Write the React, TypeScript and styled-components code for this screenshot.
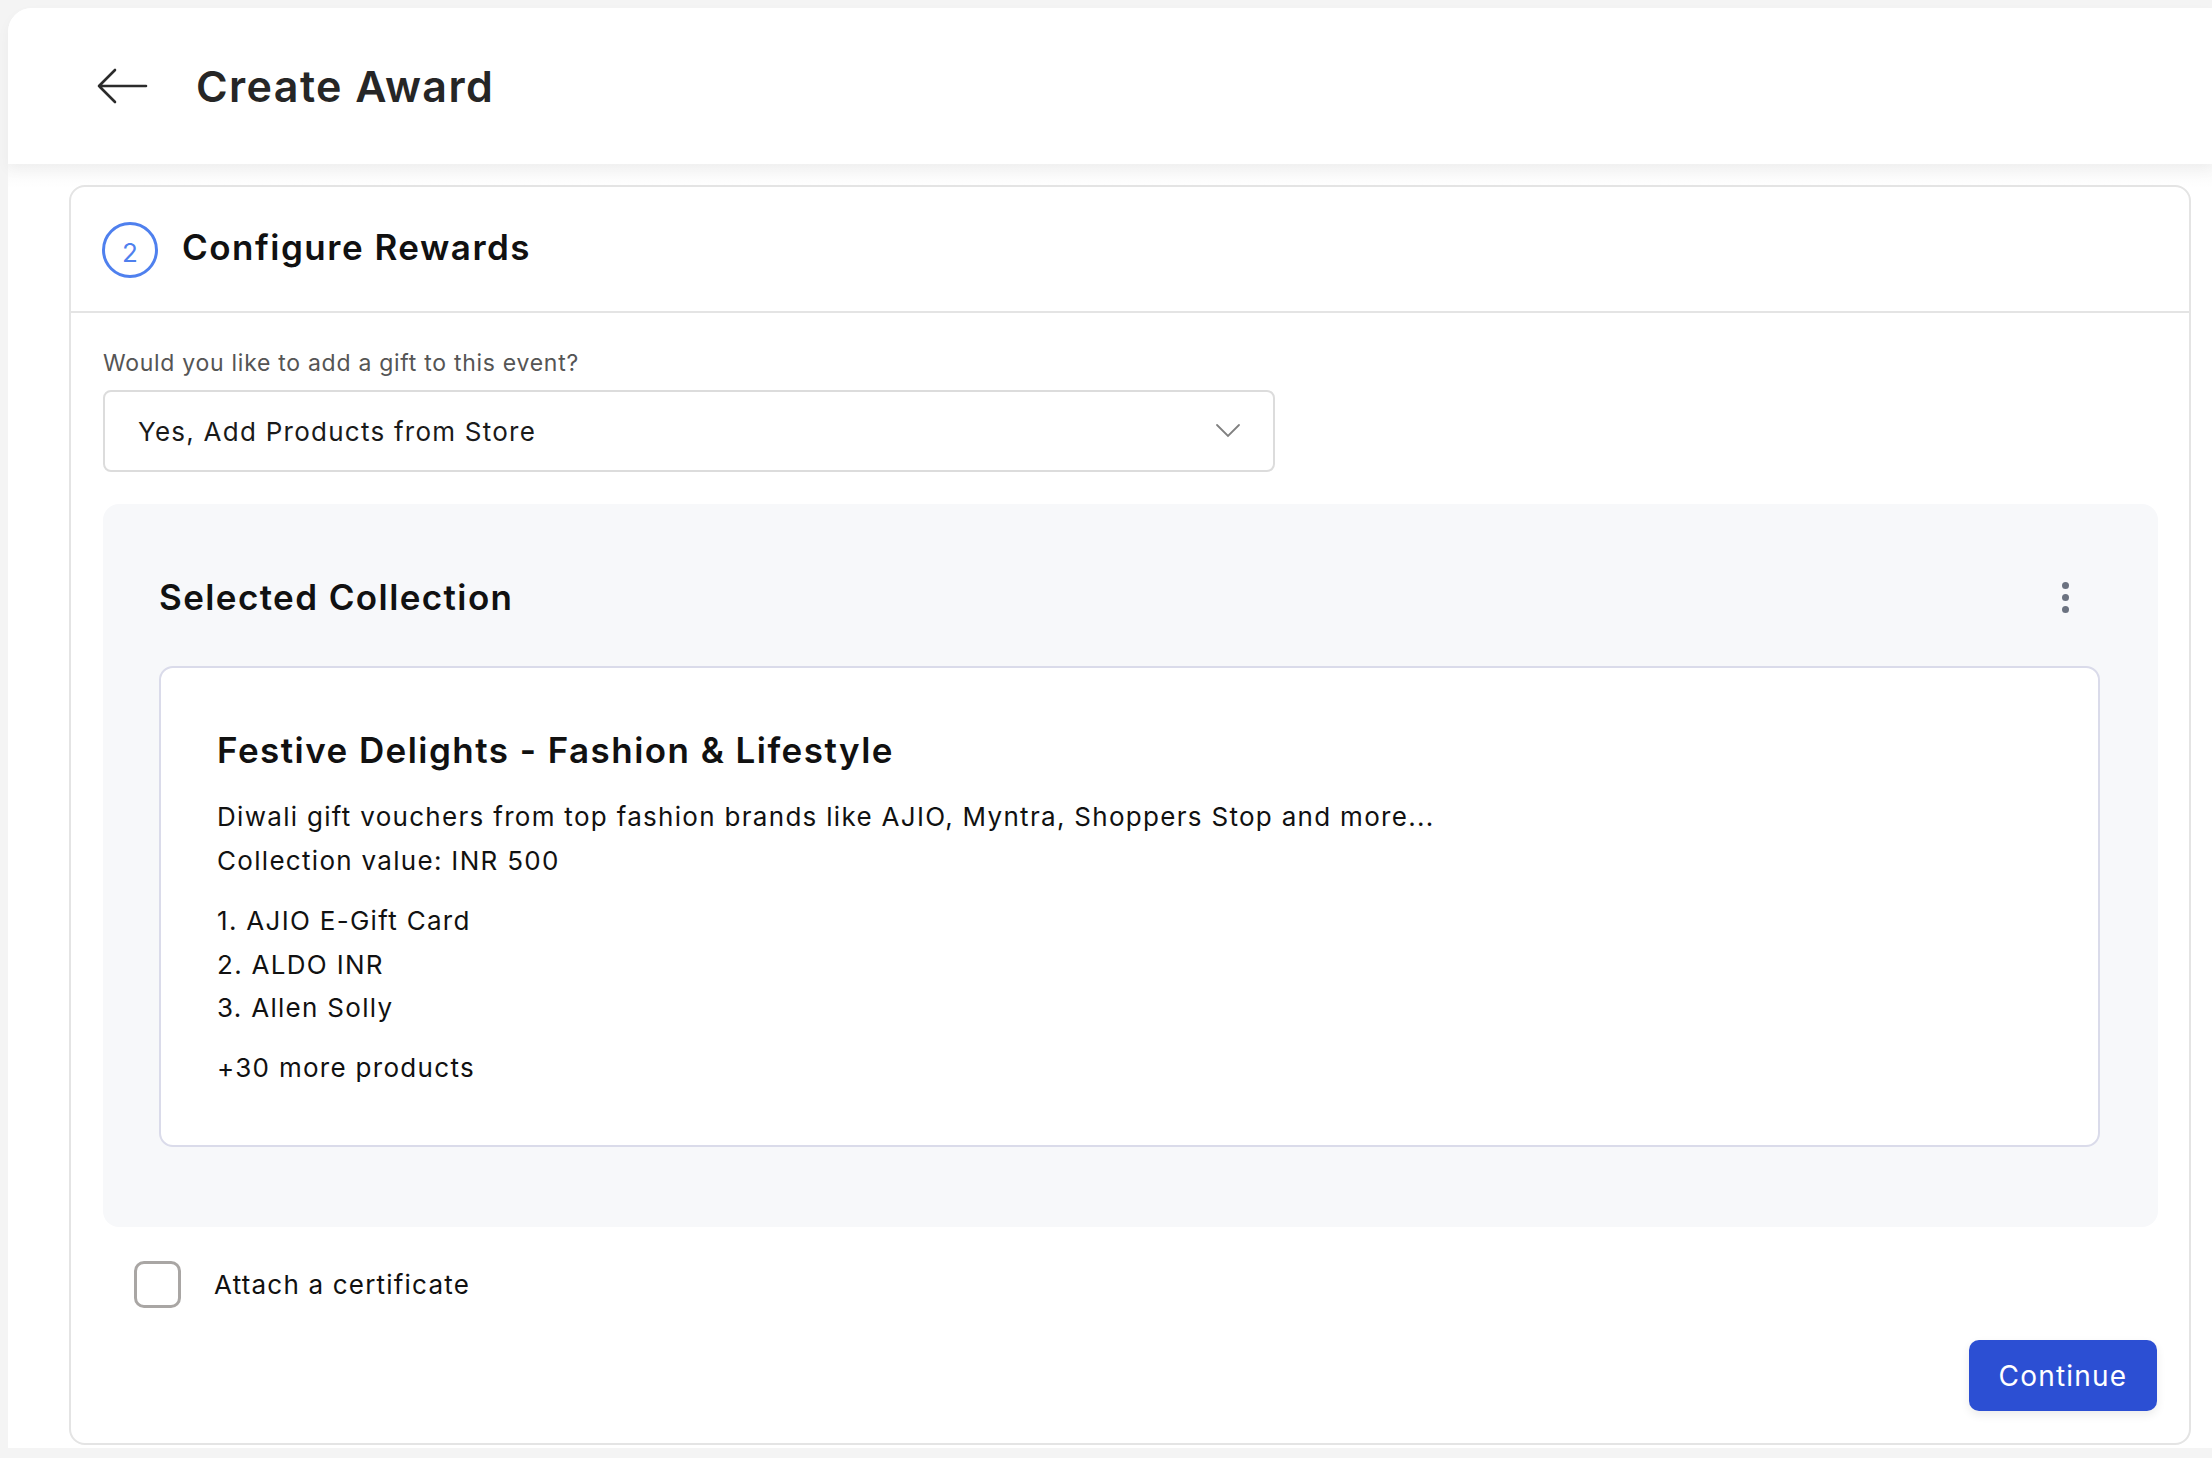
import React from "react";
import styled, { createGlobalStyle } from "styled-components";

const GlobalStyle = createGlobalStyle`
  html, body {
    margin: 0;
    padding: 0;
    background: #f4f4f4;
    font-family: Inter, "Noto Sans", "Liberation Sans", sans-serif;
    color: #111111;
  }
  * {
    box-sizing: border-box;
  }
`;

const Page = styled.div`
  width: 2212px;
  height: 1458px;
  padding: 8px 0 0 8px;
  overflow: hidden;
`;

const Surface = styled.div`
  background: #ffffff;
  border-top-left-radius: 24px;
  height: 1440px;
  display: flex;
  flex-direction: column;
`;

const TopBar = styled.header`
  height: 156px;
  display: flex;
  align-items: center;
  gap: 48px;
  padding-left: 88px;
  background: #ffffff;
  border-top-left-radius: 24px;
  box-shadow: 0 6px 14px rgba(0, 0, 0, 0.04);
  position: relative;
  z-index: 1;
`;

const BackButton = styled.button`
  border: none;
  background: none;
  padding: 0;
  display: flex;
  align-items: center;
  cursor: pointer;
`;

const PageTitle = styled.h1`
  margin: 0;
  font-size: 43px;
  font-weight: 600;
  letter-spacing: 1.4px;
  color: #262626;
`;

const Content = styled.main`
  flex: 1;
  padding: 21px 21px 0 61px;
  background: linear-gradient(#f8f8f8 0, #ffffff 24px);
`;

const StepCard = styled.section`
  border: 2px solid #e4e4e4;
  border-radius: 16px;
  background: #ffffff;
  height: 1260px;
  display: flex;
  flex-direction: column;
`;

const StepHeader = styled.div`
  height: 127px;
  display: flex;
  align-items: center;
  gap: 24px;
  padding: 0 0 4px 31px;
  border-bottom: 2px solid #e4e4e4;
`;

const StepBadge = styled.span`
  width: 56px;
  height: 56px;
  border-radius: 50%;
  border: 3px solid #4f80ee;
  color: #4f80ee;
  font-size: 26px;
  display: flex;
  align-items: center;
  justify-content: center;
  padding-top: 4px;
  margin-top: 6px;
`;

const StepTitle = styled.h2`
  margin: 0;
  font-size: 35px;
  font-weight: 600;
  letter-spacing: 1.5px;
  color: #111111;
`;

const StepBody = styled.div`
  padding: 36px 31px 32px 32px;
  display: flex;
  flex-direction: column;
`;

const FieldLabel = styled.label`
  font-size: 23px;
  color: #555555;
  line-height: 28px;
  letter-spacing: 0.72px;
  margin-bottom: 13px;
`;

const SelectBox = styled.div`
  width: 1172px;
  height: 82px;
  border: 2px solid #dcdcdc;
  border-radius: 8px;
  display: flex;
  align-items: center;
  justify-content: space-between;
  padding: 0 32px 0 33px;
  font-size: 26px;
  letter-spacing: 1.25px;
  color: #1a1a1a;
`;

const CollectionPanel = styled.div`
  margin-top: 32px;
  background: #f7f8fa;
  border-radius: 16px;
  padding: 70px 58px 80px 56px;
`;

const PanelHeader = styled.div`
  display: flex;
  align-items: center;
  justify-content: space-between;
  height: 46px;
  margin-bottom: 46px;
`;

const PanelTitle = styled.h3`
  margin: 0;
  font-size: 35px;
  font-weight: 600;
  letter-spacing: 1.4px;
  color: #111111;
`;

const MenuButton = styled.button`
  border: none;
  background: none;
  padding: 0;
  width: 24px;
  margin-right: 23px;
  display: flex;
  flex-direction: column;
  align-items: center;
  gap: 5px;
  cursor: pointer;
`;

const Dot = styled.span`
  width: 7px;
  height: 7px;
  border-radius: 50%;
  background: #6b7280;
`;

const CollectionCard = styled.div`
  background: #ffffff;
  border: 2px solid #dadbea;
  border-radius: 14px;
  padding: 60px 56px 56px 56px;
  color: #111111;
`;

const CollectionName = styled.h4`
  margin: 0 0 23px;
  font-size: 35px;
  line-height: 44px;
  font-weight: 600;
  letter-spacing: 1.45px;
`;

const Text = styled.p`
  margin: 0;
  font-size: 26px;
  line-height: 43.5px;
  letter-spacing: 1.3px;
`;

const ProductList = styled.ol`
  list-style: none;
  margin: 17px 0 16px;
  padding: 0;
  font-size: 26px;
  line-height: 43.5px;
  letter-spacing: 1.3px;
`;

const CheckRow = styled.label`
  margin-top: 34px;
  padding-left: 31px;
  display: flex;
  align-items: center;
  gap: 33px;
  font-size: 26px;
  letter-spacing: 1.2px;
  color: #111111;
  cursor: pointer;
`;

const CheckBox = styled.span`
  width: 47px;
  height: 47px;
  border: 3px solid #a9a6a4;
  border-radius: 10px;
  background: #ffffff;
`;

const Footer = styled.div`
  display: flex;
  justify-content: flex-end;
  margin-top: 32px;
  padding-right: 1px;
`;

const PrimaryButton = styled.button`
  width: 188px;
  height: 71px;
  border: none;
  border-radius: 10px;
  background: #2c4fd3;
  color: #ffffff;
  font-family: inherit;
  font-size: 28px;
  letter-spacing: 1.2px;
  box-shadow: 0 4px 10px rgba(0, 0, 0, 0.08);
  cursor: pointer;
`;

const products = ["1. AJIO E-Gift Card", "2. ALDO INR", "3. Allen Solly"];

const BackArrow = () => (
  <svg width="52" height="36" viewBox="0 0 52 36" fill="none">
    <path
      d="M50 18H3M19 2L3 18l16 16"
      stroke="#2b2b2b"
      strokeWidth="2.6"
      strokeLinecap="round"
      strokeLinejoin="round"
    />
  </svg>
);

const Chevron = () => (
  <svg width="26" height="16" viewBox="0 0 26 16" fill="none">
    <path d="M2 2l11 11L24 2" stroke="#808080" strokeWidth="1.8" strokeLinecap="round" />
  </svg>
);

export default function App() {
  return (
    <>
      <GlobalStyle />
      <Page>
        <Surface>
          <TopBar>
            <BackButton aria-label="Back">
              <BackArrow />
            </BackButton>
            <PageTitle>Create Award</PageTitle>
          </TopBar>
          <Content>
            <StepCard>
              <StepHeader>
                <StepBadge>2</StepBadge>
                <StepTitle>Configure Rewards</StepTitle>
              </StepHeader>
              <StepBody>
                <FieldLabel>Would you like to add a gift to this event?</FieldLabel>
                <SelectBox>
                  <span>Yes, Add Products from Store</span>
                  <Chevron />
                </SelectBox>
                <CollectionPanel>
                  <PanelHeader>
                    <PanelTitle>Selected Collection</PanelTitle>
                    <MenuButton aria-label="More">
                      <Dot />
                      <Dot />
                      <Dot />
                    </MenuButton>
                  </PanelHeader>
                  <CollectionCard>
                    <CollectionName>Festive Delights - Fashion &amp; Lifestyle</CollectionName>
                    <Text>
                      Diwali gift vouchers from top fashion brands like AJIO, Myntra, Shoppers Stop and more...
                    </Text>
                    <Text>Collection value: INR 500</Text>
                    <ProductList>
                      {products.map((p) => (
                        <li key={p}>{p}</li>
                      ))}
                    </ProductList>
                    <Text>+30 more products</Text>
                  </CollectionCard>
                </CollectionPanel>
                <CheckRow>
                  <CheckBox />
                  Attach a certificate
                </CheckRow>
                <Footer>
                  <PrimaryButton>Continue</PrimaryButton>
                </Footer>
              </StepBody>
            </StepCard>
          </Content>
        </Surface>
      </Page>
    </>
  );
}
